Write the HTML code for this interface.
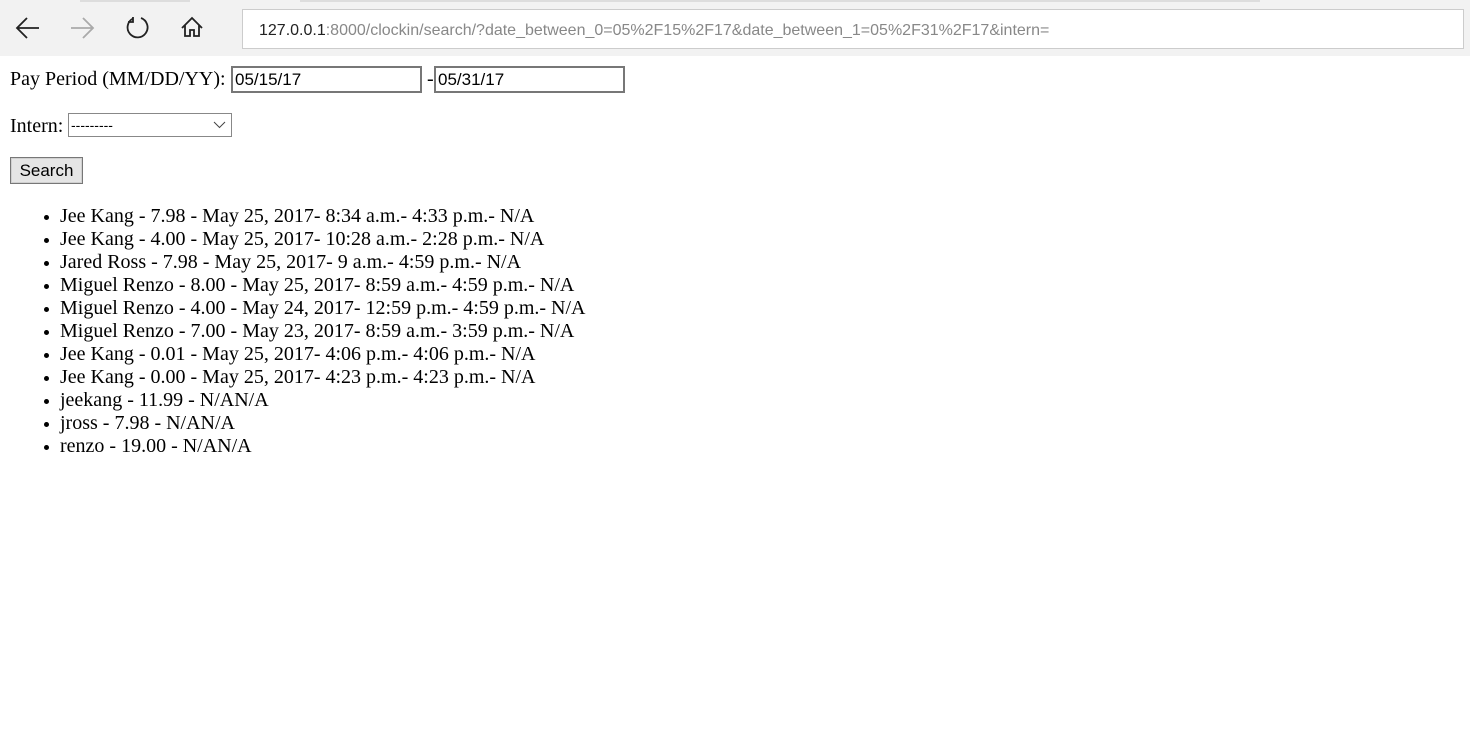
<!DOCTYPE html>
<html><head><style>
body{margin:0;width:1470px;height:731px;background:#fff;font-family:"Liberation Serif",serif;font-size:20px;color:#000;position:relative;overflow:hidden}
.bar{position:absolute;left:0;top:0;width:1470px;height:56px;background:#f2f2f2}
.strip{position:absolute;top:0;height:2px;background:#ddd}
.addr{position:absolute;left:242px;top:9px;width:1222px;height:40px;background:#fff;border:1px solid #ccc;box-sizing:border-box;font-family:"Liberation Sans",sans-serif;font-size:16px;color:#888;line-height:42px;padding-left:16px}
.addr b{font-weight:normal;color:#222}
.ic{position:absolute;top:14px}
.t{position:absolute;left:10px;white-space:nowrap}
.inp{position:absolute;height:27px;border:2px solid #777;box-sizing:border-box;font-family:"Liberation Sans",sans-serif;font-size:17px;line-height:23px;padding-left:2px;background:#fff}
ul{position:absolute;left:0;top:205px;margin:0;padding-left:60px;line-height:23px}
li{list-style:none;position:relative}
li:before{content:"";position:absolute;left:-16px;top:10px;width:5px;height:5px;border-radius:50%;background:#000}
</style></head><body>
<div class="bar"></div>
<div class="strip" style="left:80px;width:110px"></div>
<div class="strip" style="left:300px;width:960px"></div>
<svg class="ic" style="left:14px" width="28" height="28" viewBox="0 0 28 28"><path d="M25 14H3M13 4L3 14l10 10" fill="none" stroke="#222" stroke-width="1.8"/></svg>
<svg class="ic" style="left:68px" width="28" height="28" viewBox="0 0 28 28"><path d="M3 14h22M15 4l10 10-10 10" fill="none" stroke="#aaa" stroke-width="1.8"/></svg>
<svg class="ic" style="left:124px" width="28" height="28" viewBox="0 0 28 28"><path d="M9 4.5A10 10 0 1 0 17 4" fill="none" stroke="#222" stroke-width="1.8"/><path d="M9 3v5H4" fill="none" stroke="#222" stroke-width="1.8"/></svg>
<svg class="ic" style="left:179px" width="26" height="28" viewBox="0 0 26 28"><path d="M3 14L13 4l10 10M6 11v11h5v-6h4v6h5V11" fill="none" stroke="#222" stroke-width="1.8"/></svg>
<div class="addr"><b>127.0.0.1</b>:8000/clockin/search/?date_between_0=05%2F15%2F17&amp;date_between_1=05%2F31%2F17&amp;intern=</div>
<div class="t" style="top:68px">Pay Period (MM/DD/YY):</div>
<div class="inp" style="left:231px;top:66px;width:191px">05/15/17</div>
<div class="t" style="left:427px;top:68px">-</div>
<div class="inp" style="left:434px;top:66px;width:191px">05/31/17</div>
<div class="t" style="top:115px">Intern:</div>
<div class="inp" style="left:68px;top:113px;width:164px;height:24px;border:1px solid #888;line-height:22px;font-size:14px">---------<svg style="position:absolute;right:5px;top:7px" width="13" height="8"><path d="M1 1l5.5 5.5L12 1" fill="none" stroke="#444"/></svg></div>
<div class="inp" style="left:10px;top:157px;width:73px;border:1px solid #777;background:#e5e5e5;text-align:center;padding:0;line-height:25px;font-size:17px;box-shadow:inset 0 0 0 1px #d0d0d0">Search</div>
<ul>
<li>Jee Kang - 7.98 - May 25, 2017- 8:34 a.m.- 4:33 p.m.- N/A</li>
<li>Jee Kang - 4.00 - May 25, 2017- 10:28 a.m.- 2:28 p.m.- N/A</li>
<li>Jared Ross - 7.98 - May 25, 2017- 9 a.m.- 4:59 p.m.- N/A</li>
<li>Miguel Renzo - 8.00 - May 25, 2017- 8:59 a.m.- 4:59 p.m.- N/A</li>
<li>Miguel Renzo - 4.00 - May 24, 2017- 12:59 p.m.- 4:59 p.m.- N/A</li>
<li>Miguel Renzo - 7.00 - May 23, 2017- 8:59 a.m.- 3:59 p.m.- N/A</li>
<li>Jee Kang - 0.01 - May 25, 2017- 4:06 p.m.- 4:06 p.m.- N/A</li>
<li>Jee Kang - 0.00 - May 25, 2017- 4:23 p.m.- 4:23 p.m.- N/A</li>
<li>jeekang - 11.99 - N/AN/A</li>
<li>jross - 7.98 - N/AN/A</li>
<li>renzo - 19.00 - N/AN/A</li>
</ul>
</body></html>
